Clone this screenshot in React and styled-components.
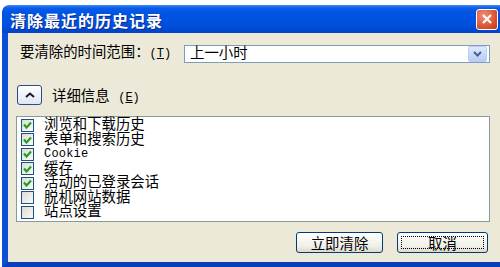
import React from "react";
import styled, { createGlobalStyle } from "styled-components";

const Global = createGlobalStyle`
  html, body { margin: 0; padding: 0; background: #fff; }
  body { width: 500px; height: 267px; overflow: hidden; }
`;

const Win = styled.div`
  margin: 5px 0 0 2px;
  width: 498px;
  height: 262px;
  display: flex;
  flex-direction: column;
  font-family: "Liberation Mono", "Noto Sans CJK SC", monospace;
  font-size: 14.4px;
  color: #000;
`;

const TitleBar = styled.div`
  height: 28px;
  border-radius: 7px 0 0 0;
  background: linear-gradient(#3d8cf5 0px, #0a5de8 3px, #0054e3 8px, #0050dd 20px, #0044c8 28px);
  display: flex;
  align-items: center;
  padding: 0 2px 0 8px;
  box-sizing: border-box;
`;

const Title = styled.div`
  flex: 1;
  color: #fff;
  font-family: "Noto Sans CJK SC", sans-serif;
  font-weight: 700;
  font-size: 16px;
  letter-spacing: 1px;
  text-shadow: 1px 1px 0 #0a2a8c;
  padding-top: 1px;
`;

const CloseBtn = styled.div`
  width: 22px;
  height: 21px;
  box-sizing: border-box;
  border: 1px solid #fff;
  border-radius: 3px;
  background: radial-gradient(circle at 35% 30%, #f0907a, #dd5530 60%, #c03a18);
  display: flex;
  align-items: center;
  justify-content: center;
`;

const Body = styled.div`
  flex: 1;
  background: #ece9d8;
  border-left: 6px solid #0a4fd6;
  border-bottom: 5px solid #0a3fb8;
  padding: 0 10px 0 8px;
  display: flex;
  flex-direction: column;
`;

const Row = styled.div`
  display: flex;
  align-items: center;
  margin-top: ${(p) => p.$top}px;
  padding-left: ${(p) => p.$left || 0}px;
`;

const Label = styled.span`
  white-space: nowrap;
  width: 164px;
  line-height: 18px;
`;

const Mnemonic = styled.span`
  font-size: 12px;
`;

const Select = styled.div`
  flex: 1;
  height: 18px;
  box-sizing: border-box;
  border: 1px solid #7f9db9;
  background: #fff;
  display: flex;
  align-items: center;
  padding: 0 2px 0 5px;
  line-height: 16px;
`;

const SelectText = styled.span`
  flex: 1;
`;

const DropBtn = styled.div`
  width: 17px;
  height: 14px;
  border-radius: 2px;
  border: 1px solid #b9cdf8;
  background: linear-gradient(#dde9fe, #b6cdf7);
  display: flex;
  align-items: center;
  justify-content: center;
`;

const ExpandBtn = styled.div`
  width: 25px;
  height: 20px;
  box-sizing: border-box;
  border: 1px solid #2a4a8a;
  border-radius: 3px;
  background: linear-gradient(#ffffff, #dfe6f4);
  display: flex;
  align-items: center;
  justify-content: center;
  margin-right: 10px;
`;

const ListBox = styled.div`
  margin: 11px 0 0 0;
  height: 106px;
  box-sizing: border-box;
  border: 1px solid #8a9a96;
  background: #fff;
  padding: 1px 0 0 4px;
`;

const Item = styled.div`
  display: flex;
  align-items: center;
  height: 14.5px;
  line-height: 14.5px;
`;

const ItemText = styled.span`
  font-size: ${(p) => (p.$latin ? "12px" : "inherit")};
  letter-spacing: ${(p) => (p.$latin ? "0.2px" : "0")};
`;

const Box = styled.div`
  width: 13px;
  height: 13px;
  box-sizing: border-box;
  border: 1px solid #1c5180;
  background: linear-gradient(135deg, #dcdcd6, #fafaf8);
  margin-right: 10px;
  display: flex;
  align-items: center;
  justify-content: center;
`;

const Buttons = styled.div`
  display: flex;
  justify-content: flex-end;
  gap: 14px;
  margin: 10px 2px 0 0;
`;

const Button = styled.div`
  width: ${(p) => p.$w}px;
  height: 21px;
  box-sizing: border-box;
  border: 1px solid #003c74;
  border-radius: 3px;
  background: linear-gradient(#ffffff, #f0efe8 70%, #dcd9cc);
  display: flex;
  align-items: center;
  justify-content: center;
  font-family: "Noto Sans CJK SC", sans-serif;
  font-size: 14.4px;
  position: relative;
  &::after {
    content: "";
    display: ${(p) => (p.$focus ? "block" : "none")};
    position: absolute;
    inset: 3px;
    border: 1px dotted #000;
  }
`;

const Check = () => (
  <svg width="9" height="8" viewBox="0 0 9 8">
    <path d="M1 3.5 L3.5 6.5 L8 1.5" stroke="#21a121" strokeWidth="2.2" fill="none" />
  </svg>
);

const items = [
  ["浏览和下载历史", true],
  ["表单和搜索历史", true],
  ["Cookie", true, true],
  ["缓存", true],
  ["活动的已登录会话", true],
  ["脱机网站数据", false],
  ["站点设置", false],
];

export default function App() {
  return (
    <>
      <Global />
      <Win>
        <TitleBar>
          <Title>清除最近的历史记录</Title>
          <CloseBtn>
            <svg width="12" height="12" viewBox="0 0 12 12">
              <path d="M2 2 L10 10 M10 2 L2 10" stroke="#fff" strokeWidth="2.2" />
            </svg>
          </CloseBtn>
        </TitleBar>
        <Body>
          <Row $top={11} $left={4}>
            <Label>要清除的时间范围：<Mnemonic>(<u>T</u>)</Mnemonic></Label>
            <Select>
              <SelectText>上一小时</SelectText>
              <DropBtn>
                <svg width="9" height="6" viewBox="0 0 9 6">
                  <path d="M1 1 L4.5 4.5 L8 1" stroke="#4d6185" strokeWidth="2" fill="none" />
                </svg>
              </DropBtn>
            </Select>
          </Row>
          <Row $top={21} $left={1}>
            <ExpandBtn>
              <svg width="10" height="6" viewBox="0 0 10 6">
                <path d="M1 5 L5 1.5 L9 5" stroke="#1a1a2a" strokeWidth="2" fill="none" />
              </svg>
            </ExpandBtn>
            <span>详细信息 <Mnemonic>(<u>E</u>)</Mnemonic></span>
          </Row>
          <ListBox>
            {items.map(([t, c, latin]) => (
              <Item key={t}>
                <Box>{c && <Check />}</Box>
                <ItemText $latin={latin}>{t}</ItemText>
              </Item>
            ))}
          </ListBox>
          <Buttons>
            <Button $w={87}>立即清除</Button>
            <Button $w={91} $focus>取消</Button>
          </Buttons>
        </Body>
      </Win>
    </>
  );
}
